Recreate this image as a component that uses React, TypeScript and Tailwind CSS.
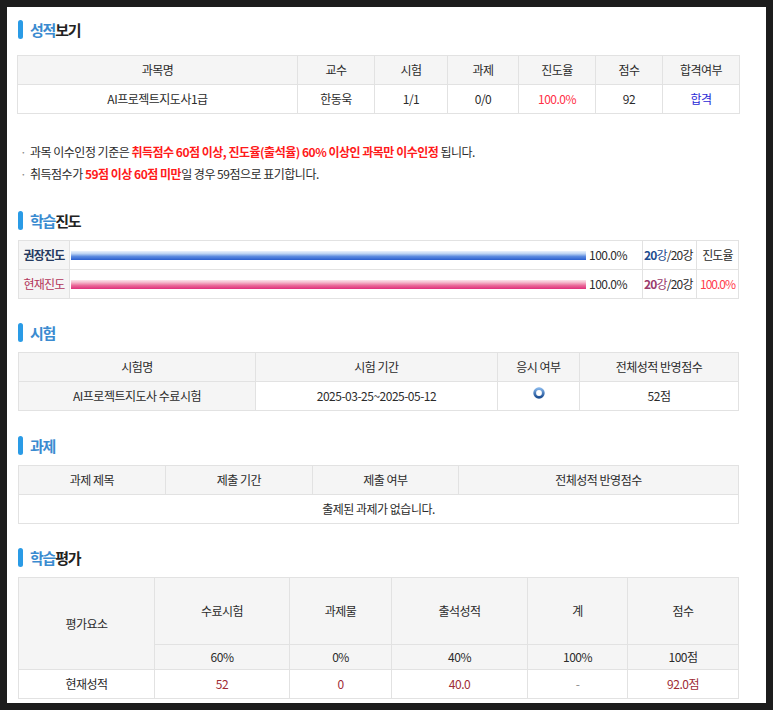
import React from "react";

const B = "border border-[#e2e2e2]";

function Heading({ blue, dark, className = "" }: { blue: string; dark?: string; className?: string }) {
  return (
    <div className={"flex items-center h-[19px] ml-px " + className}>
      <span className="w-[5px] h-[19px] rounded-full bg-[#2a9be6]" />
      <span className="ml-[7px] text-[15px] leading-[19px] font-bold tracking-[-1.2px]">
        <span className="text-[#3b8bd0]">{blue}</span>
        {dark && <span className="text-[#222]">{dark}</span>}
      </span>
    </div>
  );
}

function Ring() {
  return (
    <svg width="12" height="12" viewBox="0 0 12 12" className="inline-block">
      <defs>
        <linearGradient id="rg" x1="0" y1="0" x2="0" y2="1">
          <stop offset="0" stopColor="#7fb0e6" />
          <stop offset="1" stopColor="#1d4f93" />
        </linearGradient>
      </defs>
      <circle cx="6" cy="6" r="4.3" fill="#fff" stroke="url(#rg)" strokeWidth="2.8" />
    </svg>
  );
}

export default function App() {
  const th = `${B} bg-[#f5f5f5] font-normal text-center`;
  const td = `${B} text-center`;
  return (
    <div className="w-[773px] h-[710px] overflow-hidden bg-[#1c1c1c] p-[7px] font-['Noto_Sans_CJK_KR',sans-serif] text-[#2b2b2b] text-[12px] tracking-[-0.5px]">
      <div className="bg-white h-full pl-[10px] pt-[13px]">
        <Heading blue="성적" dark="보기" />

        <table className="mt-[16px] w-[722px] table-fixed border-collapse">
          <colgroup>
            <col className="w-[280px]" />
            <col className="w-[77px]" />
            <col className="w-[73px]" />
            <col className="w-[71px]" />
            <col className="w-[77px]" />
            <col className="w-[67px]" />
            <col className="w-[77px]" />
          </colgroup>
          <tbody>
            <tr className="h-[29px]">
              <th className={th}>과목명</th>
              <th className={th}>교수</th>
              <th className={th}>시험</th>
              <th className={th}>과제</th>
              <th className={th}>진도율</th>
              <th className={th}>점수</th>
              <th className={th}>합격여부</th>
            </tr>
            <tr className="h-[29px]">
              <td className={td}>AI프로젝트지도사1급</td>
              <td className={td}>한동욱</td>
              <td className={td}>1/1</td>
              <td className={td}>0/0</td>
              <td className={td + " text-[#ff2e44]"}>100.0%</td>
              <td className={td}>92</td>
              <td className={td + " text-[#2b2bd6]"}>합격</td>
            </tr>
          </tbody>
        </table>

        <div className="mt-[27px] ml-px">
          <div className="flex items-center h-[22px]">
            <span className="w-[12px] pl-[2px] text-[#888] text-left">·</span>
            <span>
              과목 이수인정 기준은{" "}
              <b className="text-[#ff1a1a]">취득점수 60점 이상, 진도율(출석율) 60% 이상인 과목만 이수인정</b> 됩니다.
            </span>
          </div>
          <div className="flex items-center h-[22px]">
            <span className="w-[12px] pl-[2px] text-[#888] text-left">·</span>
            <span>
              취득점수가 <b className="text-[#ff1a1a]">59점 이상 60점 미만</b>일 경우 59점으로 표기합니다.
            </span>
          </div>
        </div>

        <Heading blue="학습" dark="진도" className="mt-[26px]" />

        <table className="mt-[10px] ml-px w-[720px] table-fixed border-collapse">
          <colgroup>
            <col className="w-[51px]" />
            <col className="w-[573px]" />
            <col className="w-[54px]" />
            <col className="w-[42px]" />
          </colgroup>
          <tbody>
            <tr className="h-[29px]">
              <td className={`${B} bg-[#f5f5f5] text-center font-bold text-[#253a60] tracking-[-0.8px]`}>권장진도</td>
              <td className={`${B} pl-px`}>
                <div className="flex items-center">
                  <div className="w-[515px] h-[9px] bg-[linear-gradient(to_bottom,#eaf2fc_0%,#bcd3f3_30%,#5d8ce0_60%,#2a5fcf_100%)]" />
                  <span className="ml-[3px]">100.0%</span>
                </div>
              </td>
              <td className={`${B} whitespace-nowrap pl-px tracking-[-0.8px]`}>
                <b className="text-[#1d4b8f]">20</b>
                <span className="text-[#1d4b8f]">강</span>/20강
              </td>
              <td className={td + " tracking-[-0.8px]"}>진도율</td>
            </tr>
            <tr className="h-[29px]">
              <td className={`${B} bg-[#f5f5f5] text-center text-[#b3365a] tracking-[-0.8px]`}>현재진도</td>
              <td className={`${B} pl-px`}>
                <div className="flex items-center">
                  <div className="w-[515px] h-[9px] bg-[linear-gradient(to_bottom,#fce6ec_0%,#f4b3c8_30%,#ea6b9a_60%,#df2f7a_100%)]" />
                  <span className="ml-[3px]">100.0%</span>
                </div>
              </td>
              <td className={`${B} whitespace-nowrap pl-px tracking-[-0.8px]`}>
                <b className="text-[#9a3a6c]">20</b>
                <span className="text-[#9a3a6c]">강</span>/20강
              </td>
              <td className={td + " text-[#ff3b4b] tracking-[-1px] px-0"}>100.0%</td>
            </tr>
          </tbody>
        </table>

        <Heading blue="시험" className="mt-[24px]" />

        <table className="mt-[10px] ml-px w-[720px] table-fixed border-collapse">
          <colgroup>
            <col className="w-[237px]" />
            <col className="w-[242px]" />
            <col className="w-[82px]" />
            <col className="w-[159px]" />
          </colgroup>
          <tbody>
            <tr className="h-[29px]">
              <th className={th}>시험명</th>
              <th className={th}>시험 기간</th>
              <th className={th}>응시 여부</th>
              <th className={th}>전체성적 반영점수</th>
            </tr>
            <tr className="h-[29px]">
              <td className={`${td} bg-[#f5f5f5]`}>AI프로젝트지도사 수료시험</td>
              <td className={td}>2025-03-25~2025-05-12</td>
              <td className={td}>
                <div className="flex justify-center -mt-[7px]">
                  <Ring />
                </div>
              </td>
              <td className={td}>52점</td>
            </tr>
          </tbody>
        </table>

        <Heading blue="과제" className="mt-[25px]" />

        <table className="mt-[10px] ml-px w-[720px] table-fixed border-collapse">
          <colgroup>
            <col className="w-[147px]" />
            <col className="w-[147px]" />
            <col className="w-[146px]" />
            <col className="w-[280px]" />
          </colgroup>
          <tbody>
            <tr className="h-[29px]">
              <th className={th}>과제 제목</th>
              <th className={th}>제출 기간</th>
              <th className={th}>제출 여부</th>
              <th className={th}>전체성적 반영점수</th>
            </tr>
            <tr className="h-[29px]">
              <td className={td} colSpan={4}>
                출제된 과제가 없습니다.
              </td>
            </tr>
          </tbody>
        </table>

        <Heading blue="학습" dark="평가" className="mt-[24px]" />

        <table className="mt-[10px] ml-px w-[720px] table-fixed border-collapse">
          <colgroup>
            <col className="w-[136px]" />
            <col className="w-[135px]" />
            <col className="w-[102px]" />
            <col className="w-[136px]" />
            <col className="w-[100px]" />
            <col className="w-[111px]" />
          </colgroup>
          <tbody>
            <tr className="h-[67px]">
              <th className={th} rowSpan={2}>
                평가요소
              </th>
              <th className={th}>수료시험</th>
              <th className={th}>과제물</th>
              <th className={th}>출석성적</th>
              <th className={th}>계</th>
              <th className={th}>점수</th>
            </tr>
            <tr className="h-[25px]">
              <td className={`${td} bg-[#f5f5f5]`}>60%</td>
              <td className={`${td} bg-[#f5f5f5]`}>0%</td>
              <td className={`${td} bg-[#f5f5f5]`}>40%</td>
              <td className={`${td} bg-[#f5f5f5]`}>100%</td>
              <td className={`${td} bg-[#f5f5f5]`}>100점</td>
            </tr>
            <tr className="h-[29px]">
              <td className={td}>현재성적</td>
              <td className={td + " text-[#9e2b35]"}>52</td>
              <td className={td + " text-[#9e2b35]"}>0</td>
              <td className={td + " text-[#9e2b35]"}>40.0</td>
              <td className={td + " text-[#888]"}>-</td>
              <td className={td + " text-[#9e2b35]"}>92.0점</td>
            </tr>
          </tbody>
        </table>
      </div>
    </div>
  );
}
